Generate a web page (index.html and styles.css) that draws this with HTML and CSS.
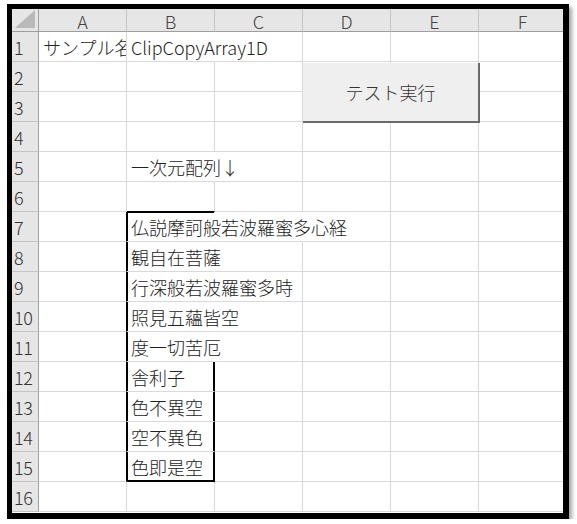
FILE: index.html
```html
<!DOCTYPE html>
<html lang="ja">
<head>
<meta charset="utf-8">
<title>Sheet</title>
<link rel="stylesheet" href="styles.css">
</head>
<body>
<div class="frame">
  <div class="sheet">
    <div class="corner"><svg width="26" height="22" viewBox="0 0 26 22"><polygon points="3,19 23,1 23,19" fill="#b9b9b9"/></svg></div>
    <div class="ch">A</div><div class="ch">B</div><div class="ch">C</div><div class="ch">D</div><div class="ch">E</div><div class="ch">F</div>

    <div class="rh">1</div><div class="c clip">サンプル名</div><div class="c nr">ClipCopyArray1D</div><div class="c"></div><div class="c"></div><div class="c"></div><div class="c"></div>
    <div class="rh">2</div><div class="c"></div><div class="c"></div><div class="c"></div><div class="c"></div><div class="c"></div><div class="c"></div>
    <div class="rh">3</div><div class="c"></div><div class="c"></div><div class="c"></div><div class="c"></div><div class="c"></div><div class="c"></div>
    <div class="rh">4</div><div class="c"></div><div class="c"></div><div class="c"></div><div class="c"></div><div class="c"></div><div class="c"></div>
    <div class="rh">5</div><div class="c"></div><div class="c nr">一次元配列↓</div><div class="c"></div><div class="c"></div><div class="c"></div><div class="c"></div>
    <div class="rh">6</div><div class="c"></div><div class="c bb"></div><div class="c"></div><div class="c"></div><div class="c"></div><div class="c"></div>
    <div class="rh">7</div><div class="c br"></div><div class="c nr tp">仏説摩訶般若波羅蜜多心経</div><div class="c nr"></div><div class="c"></div><div class="c"></div><div class="c"></div>
    <div class="rh">8</div><div class="c br"></div><div class="c nr lf">観自在菩薩</div><div class="c"></div><div class="c"></div><div class="c"></div><div class="c"></div>
    <div class="rh">9</div><div class="c br"></div><div class="c nr lf">行深般若波羅蜜多時</div><div class="c"></div><div class="c"></div><div class="c"></div><div class="c"></div>
    <div class="rh">10</div><div class="c br"></div><div class="c nr lf">照見五蘊皆空</div><div class="c"></div><div class="c"></div><div class="c"></div><div class="c"></div>
    <div class="rh">11</div><div class="c br"></div><div class="c nr lf">度一切苦厄</div><div class="c"></div><div class="c"></div><div class="c"></div><div class="c"></div>
    <div class="rh">12</div><div class="c br"></div><div class="c rt">舎利子</div><div class="c"></div><div class="c"></div><div class="c"></div><div class="c"></div>
    <div class="rh">13</div><div class="c br"></div><div class="c rt">色不異空</div><div class="c"></div><div class="c"></div><div class="c"></div><div class="c"></div>
    <div class="rh">14</div><div class="c br"></div><div class="c rt">空不異色</div><div class="c"></div><div class="c"></div><div class="c"></div><div class="c"></div>
    <div class="rh">15</div><div class="c br"></div><div class="c rt bt">色即是空</div><div class="c"></div><div class="c"></div><div class="c"></div><div class="c"></div>
    <div class="rh">16</div><div class="c"></div><div class="c"></div><div class="c"></div><div class="c"></div><div class="c"></div><div class="c"></div>
  </div>
  <div class="button">テスト実行</div>
</div>
</body>
</html>
```

FILE: styles.css
```css
html, body {
  margin: 0;
  padding: 0;
  background: #ffffff;
}

body {
  font-family: "Noto Sans CJK JP", "Noto Sans", sans-serif;
  color: #222;
}

.frame {
  position: relative;
  margin: 4px 0 0 7px;
  width: 551px;
  height: 504px;
  border: 5px solid #000;
  border-right-width: 6px;
  border-bottom-width: 6px;
  box-shadow: 3px 3px 4px rgba(0, 0, 0, 0.35);
  overflow: hidden;
  background: #fff;
}

.sheet {
  display: grid;
  grid-template-columns: 27px repeat(6, 88px);
  grid-template-rows: 23px repeat(16, 30px);
}

.sheet > div {
  box-sizing: border-box;
  white-space: nowrap;
  font-size: 18px;
  line-height: 1;
  font-weight: 300;
}

.corner {
  background: #e6e6e6;
  border-right: 1px solid #9e9e9e;
  border-bottom: 1px solid #9e9e9e;
}

.corner svg {
  display: block;
}

.ch {
  background: #e6e6e6;
  border-right: 1px solid #c4c4c4;
  border-bottom: 1px solid #9e9e9e;
  display: flex;
  align-items: center;
  justify-content: center;
  color: #444;
  padding-top: 1px;
}

.rh {
  background: #e6e6e6;
  border-right: 1px solid #9e9e9e;
  border-bottom: 1px solid #c4c4c4;
  display: flex;
  align-items: center;
  padding-left: 2px;
  color: #333;
  letter-spacing: -0.5px;
}

.c {
  border-right: 1px solid #d9d9d9;
  border-bottom: 1px solid #d9d9d9;
  display: flex;
  align-items: center;
  padding-left: 4px;
  overflow: visible;
}

.c.clip {
  overflow: hidden;
}

.c.nr {
  border-right-color: transparent;
}

.c.br {
  border-right-color: #000;
}

.c.bb {
  border-bottom-color: #000;
}

.c.tp {
  box-shadow: inset 1px 1px 0 #000;
}

.c.lf {
  box-shadow: inset 1px 0 0 #000;
}

.c.rt {
  border-right-color: #000;
  box-shadow: inset 1px 0 0 #000, inset -1px 0 0 #000;
}

.c.rt.bt {
  border-bottom-color: #000;
  box-shadow: inset 1px 0 0 #000, inset -1px 0 0 #000, inset 0 -1px 0 #000;
}

.button {
  position: absolute;
  left: 291px;
  top: 54px;
  width: 177px;
  height: 60px;
  box-sizing: border-box;
  background: #efefef;
  border-right: 2px solid #6a6a6a;
  border-bottom: 2px solid #6a6a6a;
  display: flex;
  align-items: center;
  justify-content: center;
  font-size: 18px;
  font-weight: 300;
  color: #333;
}
```
